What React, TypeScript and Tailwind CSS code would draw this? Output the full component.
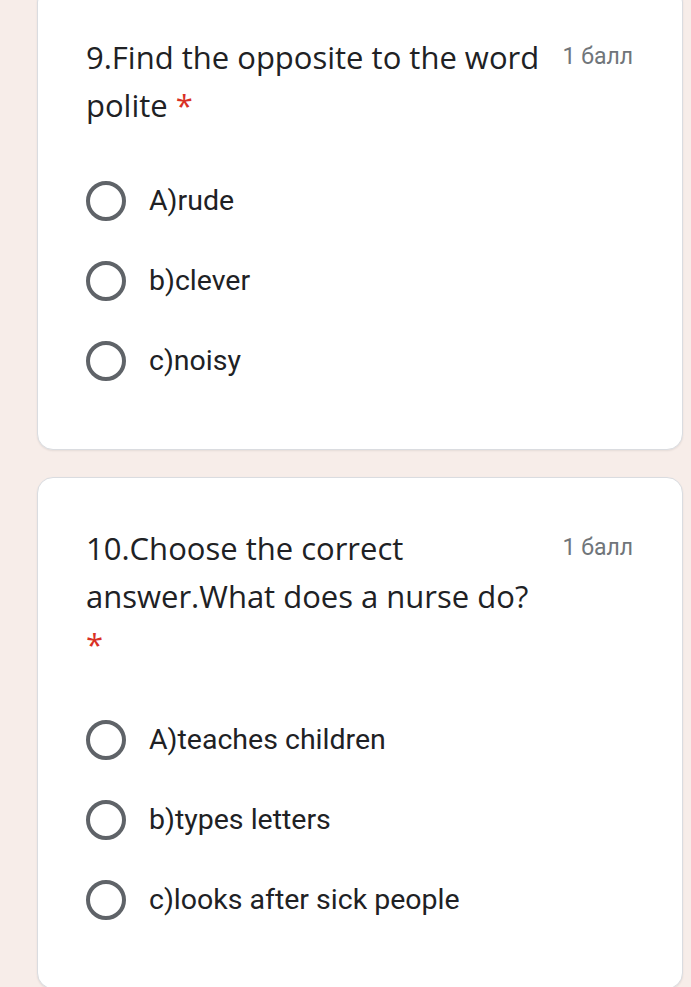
const Radio = ({ label }: { label: string }) => (
  <div className="flex items-center h-[80px]">
    <div className="w-[40px] h-[40px] rounded-full border-[4px] border-[#5f6368] shrink-0" />
    <span className="ml-[23px] text-[28.5px] text-[#202124] font-['Roboto',sans-serif]">{label}</span>
  </div>
);

const Question = ({
  title,
  options,
  asteriskOwnLine,
}: {
  title: string;
  options: string[];
  asteriskOwnLine?: boolean;
}) => (
  <div className="bg-white border border-[#dadce0] rounded-[16px] pl-[48px] pr-[49px] pt-[46px] pb-[48px] shadow-[0_1px_2px_rgba(0,0,0,0.08)]">
    <div className="flex items-start justify-between">
      <div className="text-[31px] leading-[48px] text-[#202124] font-['Open_Sans',sans-serif] pr-[14px]">
        {title}
        {asteriskOwnLine ? (
          <div className="text-[#d93025]">*</div>
        ) : (
          <span className="text-[#d93025]">{" *"}</span>
        )}
      </div>
      <span className="shrink-0 text-[23px] leading-[48px] text-[#70757a] font-['Roboto',sans-serif]">1 балл</span>
    </div>
    <div className="mt-[32px]">
      {options.map((o) => (
        <Radio key={o} label={o} />
      ))}
    </div>
  </div>
);

export default function App() {
  return (
    <div className="h-[987px] overflow-hidden bg-[#f7ede9]">
      <div className="-mt-[14px] ml-[37px] mr-[8px] flex flex-col gap-[27px]">
        <Question title="9.Find the opposite to the word polite" options={["A)rude", "b)clever", "c)noisy"]} />
        <Question
          title="10.Choose the correct answer.What does a nurse do?"
          options={["A)teaches children", "b)types letters", "c)looks after sick people"]}
          asteriskOwnLine
        />
      </div>
    </div>
  );
}
